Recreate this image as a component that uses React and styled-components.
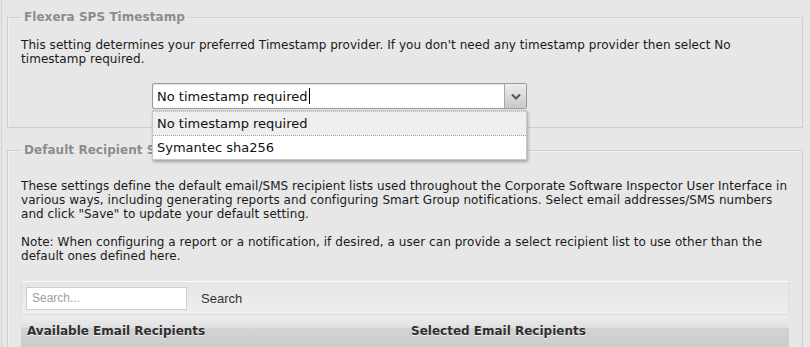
import React from 'react';
import styled, { createGlobalStyle } from 'styled-components';

const GlobalStyle = createGlobalStyle`
  html, body {
    margin: 0;
    padding: 0;
    background: #e7e7e7;
  }
  body {
    font-family: "DejaVu Sans", Verdana, sans-serif;
    font-size: 12px;
    letter-spacing: 0.05px;
    color: #1a1a1a;
  }
`;

const Page = styled.div`
  width: 802px;
  height: 347px;
  margin-left: 1px;
  border-left: 1px solid #d2d2d2;
  overflow: hidden;
  padding-top: 10px;
  box-sizing: border-box;
`;

const Fieldset = styled.fieldset`
  position: relative;
  margin: 0 0 ${(p) => p.$gap || '0'} 5px;
  padding: ${(p) => p.$pad};
  border: 1px solid #cfcfcf;
  box-shadow: inset 1px 1px 0 #efefef;
  min-width: 0;
`;

const Legend = styled.legend`
  margin: 0;
  padding: 0 3px;
  font-weight: bold;
  color: #8c8c8c;
  line-height: 14px;
`;

const Text = styled.p`
  margin: 0 0 14px;
  line-height: 14px;
  &:last-of-type {
    margin-bottom: 0;
  }
`;

const ComboWrap = styled.div`
  position: relative;
  margin: 17px 0 0 131px;
  width: 375px;
`;

const Combo = styled.div`
  display: flex;
  height: 26px;
  box-sizing: border-box;
  border: 1px solid #9a9a9a;
  border-radius: 2px;
  background: #fff;
  box-shadow: inset 0 1px 2px rgba(0, 0, 0, 0.12);
`;

const ComboInput = styled.div`
  flex: 1;
  display: flex;
  align-items: center;
  padding-left: 4px;
  font-size: 13px;
  letter-spacing: 0;
  color: #111;
`;

const Caret = styled.span`
  display: inline-block;
  width: 1px;
  height: 16px;
  background: #000;
  margin-left: 1px;
`;

const ComboButton = styled.div`
  width: 21px;
  display: flex;
  align-items: center;
  justify-content: center;
  border-left: 1px solid #a8a8a8;
  background: linear-gradient(#ececec, #c9c9c9);
`;

const Menu = styled.div`
  position: absolute;
  top: 27px;
  left: 0;
  right: 0;
  z-index: 5;
  background: #fff;
  border: 1px solid #c8c8c8;
  box-shadow: 1px 2px 3px rgba(0, 0, 0, 0.3);
`;

const MenuItem = styled.div`
  height: 23px;
  display: flex;
  align-items: center;
  padding-left: 4px;
  font-size: 13px;
  letter-spacing: 0;
  color: #111;
  background: ${(p) => (p.$active ? '#efefef' : '#fff')};
  border-top: ${(p) => (p.$active ? '1px dotted #b8b8b8' : 'none')};
  border-bottom: ${(p) => (p.$active ? '1px dotted #a0a0a0' : 'none')};
`;

const SearchBar = styled.div`
  margin-top: 18px;
  height: 34px;
  box-sizing: border-box;
  display: flex;
  align-items: center;
  gap: 14px;
  padding-left: 4px;
  border: 1px solid #dcdcdc;
  border-top-color: #fafafa;
  background: linear-gradient(#e6e6e6, #efefef);
`;

const SearchInput = styled.input`
  width: 161px;
  height: 23px;
  box-sizing: border-box;
  border: 1px solid #cfcfcf;
  background: #fff;
  padding: 0 5px;
  font-family: "Liberation Sans", Arial, sans-serif;
  font-size: 12px;
  outline: none;
  &::placeholder {
    color: #a0a0a0;
  }
`;

const SearchLabel = styled.span`
  font-family: "Liberation Sans", Arial, sans-serif;
  font-size: 13px;
  letter-spacing: 0;
  color: #333;
`;

const Columns = styled.div`
  display: grid;
  grid-template-columns: 1fr 1fr;
  height: 32px;
  background: linear-gradient(#ececec 0, #e2e2e2 38%, #d3d3d3 42%, #cdcdcd 100%);
`;

const ColHead = styled.div`
  padding: 9px 0 0 6px;
  font-weight: bold;
  letter-spacing: 0;
  color: #2f2f2f;
  text-shadow: 0 1px 0 #f2f2f2;
`;

const Chevron = () => (
  <svg width="10" height="7" viewBox="0 0 10 7">
    <path d="M1 1.5 L5 5.5 L9 1.5" fill="none" stroke="#555" strokeWidth="2" />
  </svg>
);

export default function App() {
  return (
    <>
      <GlobalStyle />
      <Page>
        <Fieldset $pad="14px 13px 18px" $gap="15px">
          <Legend>Flexera SPS Timestamp</Legend>
          <Text>
            This setting determines your preferred Timestamp provider. If you don't need any timestamp provider then
            select No timestamp required.
          </Text>
          <ComboWrap>
            <Combo>
              <ComboInput>
                No timestamp required
                <Caret />
              </ComboInput>
              <ComboButton>
                <Chevron />
              </ComboButton>
            </Combo>
            <Menu>
              <MenuItem $active>No timestamp required</MenuItem>
              <MenuItem>Symantec sha256</MenuItem>
            </Menu>
          </ComboWrap>
        </Fieldset>
        <Fieldset $pad="22px 13px 0">
          <Legend>Default Recipient Settings</Legend>
          <Text>
            These settings define the default email/SMS recipient lists used throughout the Corporate Software Inspector
            User Interface in various ways, including generating reports and configuring Smart Group notifications.
            Select email addresses/SMS numbers and click "Save" to update your default setting.
          </Text>
          <Text>
            Note: When configuring a report or a notification, if desired, a user can provide a select recipient list to
            use other than the default ones defined here.
          </Text>
          <SearchBar>
            <SearchInput placeholder="Search..." />
            <SearchLabel>Search</SearchLabel>
          </SearchBar>
          <Columns>
            <ColHead>Available Email Recipients</ColHead>
            <ColHead>Selected Email Recipients</ColHead>
          </Columns>
        </Fieldset>
      </Page>
    </>
  );
}
